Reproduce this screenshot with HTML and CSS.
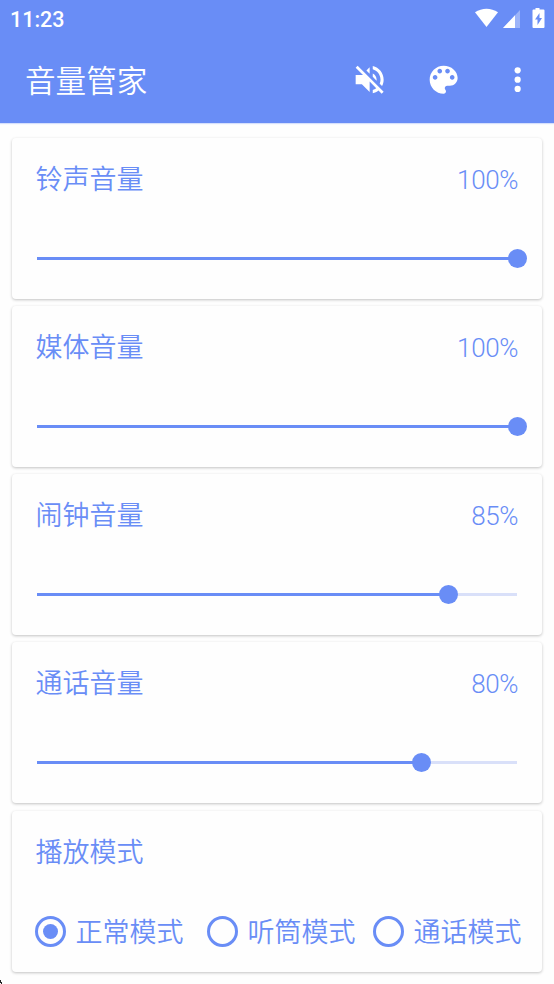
FILE: index.html
```html
<!DOCTYPE html>
<html lang="zh-CN">
<head>
<meta charset="utf-8">
<title>音量管家</title>
<link rel="stylesheet" href="styles.css">
</head>
<body>
<header class="top">
  <div class="status">
    <span class="clock">11:23</span>
    <svg class="status-icons" width="70" height="20" viewBox="0 0 70 20">
      <path d="M0 4.200C7-.5 16-.5 23 4.200L11.500 19Z"/>
      <path d="M45 2V20H28Z" opacity=".35"/>
      <path d="M40 7.300V20H28Z"/>
      <path fill-rule="evenodd" d="M60.500 0h4v1.500h4q1 0 1 1v16.500q0 1-1 1h-10q-1 0-1-1v-16.500q0-1 1-1h2zM64.500 5l-4.500 6.500h2.500v5.500l4.500-7h-2.500z"/>
    </svg>
  </div>
  <div class="toolbar">
    <h1>音量管家</h1>
    <svg class="tool mute" viewBox="0 0 24 24"><path d="M16.500 12c0-1.770-1.020-3.290-2.500-4.030v2.210l2.450 2.450c.03-.2.050-.41.050-.63zm2.500 0c0 .94-.2 1.820-.54 2.640l1.510 1.510C20.630 14.910 21 13.500 21 12c0-4.280-2.990-7.860-7-8.770v2.060c2.890.86 5 3.540 5 6.710zM4.270 3L3 4.270 7.730 9H3v6h4l5 5v-6.730l4.250 4.250c-.67.520-1.420.93-2.250 1.180v2.060c1.380-.31 2.630-.95 3.690-1.810L19.730 21 21 19.730l-9-9L4.270 3zM12 4L9.910 6.090 12 8.180V4z"/></svg>
    <svg class="tool palette" viewBox="0 0 24 24"><path d="M12 3c-4.970 0-9 4.030-9 9s4.030 9 9 9c.83 0 1.500-.67 1.500-1.500 0-.39-.15-.74-.39-1.010-.23-.26-.38-.61-.38-.99 0-.83.67-1.500 1.500-1.500H16c2.760 0 5-2.240 5-5 0-4.420-4.030-8-9-8zm-5.500 9c-.83 0-1.500-.67-1.500-1.500S5.670 9 6.500 9 8 9.670 8 10.500 7.330 12 6.500 12zm3-4C8.670 8 8 7.330 8 6.500S8.670 5 9.500 5s1.500.67 1.500 1.500S10.330 8 9.500 8zm5 0c-.83 0-1.500-.67-1.500-1.500S13.670 5 14.500 5s1.500.67 1.500 1.500S15.330 8 14.500 8zm3 4c-.83 0-1.500-.67-1.500-1.500S16.670 9 17.500 9s1.500.67 1.500 1.500-.67 1.500-1.500 1.500z"/></svg>
    <svg class="tool" viewBox="0 0 24 24"><circle cx="12" cy="6" r="2"/><circle cx="12" cy="12" r="2"/><circle cx="12" cy="18" r="2"/></svg>
  </div>
</header>
<main>
  <section class="card">
    <div class="row"><h2>铃声音量</h2><span class="value">100%</span></div>
    <div class="slider"><div class="fill" style="width:100%"></div></div>
  </section>
  <section class="card">
    <div class="row"><h2>媒体音量</h2><span class="value">100%</span></div>
    <div class="slider"><div class="fill" style="width:100%"></div></div>
  </section>
  <section class="card">
    <div class="row"><h2>闹钟音量</h2><span class="value">85%</span></div>
    <div class="slider"><div class="fill" style="width:85.700%"></div></div>
  </section>
  <section class="card">
    <div class="row"><h2>通话音量</h2><span class="value">80%</span></div>
    <div class="slider"><div class="fill" style="width:80%"></div></div>
  </section>
  <section class="card">
    <div class="row"><h2>播放模式</h2></div>
    <div class="modes">
      <div class="mode"><span class="radio on"></span><span class="label">正常模式</span></div>
      <div class="mode"><span class="radio"></span><span class="label">听筒模式</span></div>
      <div class="mode"><span class="radio"></span><span class="label">通话模式</span></div>
    </div>
  </section>
</main>
<svg class="corner" width="3" height="4" viewBox="0 0 3 4"><path d="M0 0h1v2h1v2h-1v-1h-1z"/></svg>
</body>
</html>
```
FILE: styles.css
```css
* { box-sizing: border-box; }
body {
  margin: 0;
  height: 984px;
  overflow: hidden;
  background: #fefefe;
  color: #698df6;
  font-family: Roboto, "Noto Sans CJK SC", sans-serif;
}
h1, h2 { margin: 0; }
.top { height: 123px; background: #698df6; color: #fff; box-shadow: 0 1px 1px #698df644; }
.status { height: 37px; display: flex; justify-content: space-between; padding: 8px 9px 0 10px; }
.clock { font-size: 21.500px; line-height: 23px; font-weight: 500; }
.status-icons { fill: #fff; }
.toolbar { height: 86px; display: flex; align-items: center; padding-left: 25px; padding-right: 18px; }
h1 { flex: 1; font-size: 30.600px; line-height: 44px; font-weight: 350; padding-top: 3px; }
.tool { width: 37.300px; height: 37.300px; fill: #fff; }
.mute { margin-right: 37px; }
.palette { margin-right: 36.500px; }
main { display: flex; flex-direction: column; gap: 7px; padding: 15px 12px 0; }
.card {
  height: 161px;
  padding: 21px 24px 0;
  border-radius: 4px;
  background: #fefefe;
  box-shadow: 0 1px 3px #0000003d;
}
.card:last-child { margin-top: 1px; }
.row { display: flex; justify-content: space-between; height: 40px; align-items: center; }
h2 { font-size: 27px; line-height: 40px; font-weight: 350; padding-top: 1px; margin-left: -.4px; }
.value { font-size: 26px; line-height: 40px; font-weight: 300; padding-top: 1px; letter-spacing: -.4px; }
.slider { height: 3px; margin: 58px 1px 0; background: #d9e0f9; }
.fill { position: relative; height: 3px; background: #698df6; }
.fill::after {
  content: "";
  position: absolute;
  right: -9.500px;
  top: -8px;
  width: 19px;
  height: 19px;
  border-radius: 50%;
  background: #698df6;
}
.modes { display: flex; margin: 39px -10px 0 -1px; height: 40px; font-size: 27px; font-weight: 350; }
.mode { display: flex; align-items: center; white-space: nowrap; line-height: 40px; }
.mode + .mode { margin-left: 23.500px; }
.mode + .mode + .mode { margin-left: 17.500px; }
.label { padding-top: 4px; }
.radio { width: 31px; height: 31px; margin-right: 9.500px; border: 3px solid #698df6; border-radius: 50%; display: flex; align-items: center; justify-content: center; }
.on::after { content: ""; width: 15px; height: 15px; border-radius: 50%; background: #698df6; }
.corner { position: absolute; left: 0; bottom: 0; fill: #222; }
```
